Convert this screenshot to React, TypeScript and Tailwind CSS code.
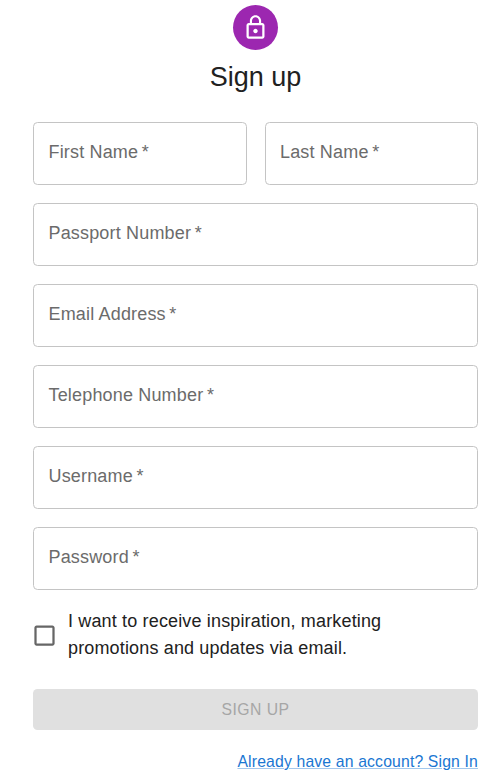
type FieldProps = { label: string };

function Field({ label }: FieldProps) {
  return (
    <label className="flex h-[63px] min-w-0 flex-1 items-center rounded-[4.5px] border border-[#c4c4c4] px-[14.5px] pb-[3px] text-[18px] leading-[26px] tracking-[0.00938em] text-[#6b6b6b]">
      <span className="whitespace-nowrap">
        {label}
        <span className="tracking-normal">{'\u2009*'}</span>
      </span>
    </label>
  );
}

export default function App() {
  return (
    <main className="flex h-[775px] w-[498px] flex-col items-center overflow-hidden bg-white pr-5 pl-[33px] pt-[5px] font-['Liberation_Sans',Arial,sans-serif] text-[#212121]">
      <div className="flex size-[45px] shrink-0 items-center justify-center rounded-full bg-[#9c27b0] text-white">
        <svg viewBox="0 0 24 24" className="size-[27px]" fill="currentColor">
          <path d="M12 17c1.1 0 2-.9 2-2s-.9-2-2-2-2 .9-2 2 .9 2 2 2zm6-9h-1V6c0-2.76-2.24-5-5-5S7 3.24 7 6v2H6c-1.1 0-2 .9-2 2v10c0 1.1.9 2 2 2h12c1.1 0 2-.9 2-2V10c0-1.1-.9-2-2-2zM8.9 6c0-1.71 1.39-3.1 3.1-3.1s3.1 1.39 3.1 3.1v2H8.9V6zM18 20H6V10h12v10z" />
        </svg>
      </div>
      <h1 className="mt-[9px] text-[27px] leading-9">Sign up</h1>

      <form className="mt-[27px] flex w-full flex-col">
        <div className="flex flex-col gap-[18px]">
          <div className="flex gap-[18px]">
            <Field label="First Name" />
            <Field label="Last Name" />
          </div>
          <div className="flex"><Field label="Passport Number" /></div>
          <div className="flex"><Field label="Email Address" /></div>
          <div className="flex"><Field label="Telephone Number" /></div>
          <div className="flex"><Field label="Username" /></div>
          <div className="flex"><Field label="Password" /></div>
        </div>

        <label className="mt-[18px] flex items-center">
          <svg viewBox="0 0 24 24" className="-ml-[2px] size-[27px] shrink-0 text-[#666666]" fill="currentColor">
            <path d="M19 5v14H5V5h14m0-2H5c-1.1 0-2 .9-2 2v14c0 1.1.9 2 2 2h14c1.1 0 2-.9 2-2V5c0-1.1-.9-2-2-2z" />
          </svg>
          <span className="ml-[10px] text-[18px] leading-[27px] tracking-[0.0085em]">
            I want to receive inspiration, marketing
            <br />
            promotions and updates via email.
          </span>
        </label>

        <button
          type="button"
          disabled
          className="mt-[27px] flex h-[41px] items-center justify-center rounded-[4.5px] bg-[#e0e0e0] text-[15.75px] tracking-[0.02857em] text-[#a6a6a6]"
        >
          SIGN UP
        </button>
        <div className="mt-[21px] flex justify-end">
          <a href="#" className="text-[15.75px] leading-[22.5px] tracking-[0.01em] text-[#1976d2] underline decoration-[#1976d2]/40">
            Already have an account? Sign In
          </a>
        </div>
      </form>
    </main>
  );
}
